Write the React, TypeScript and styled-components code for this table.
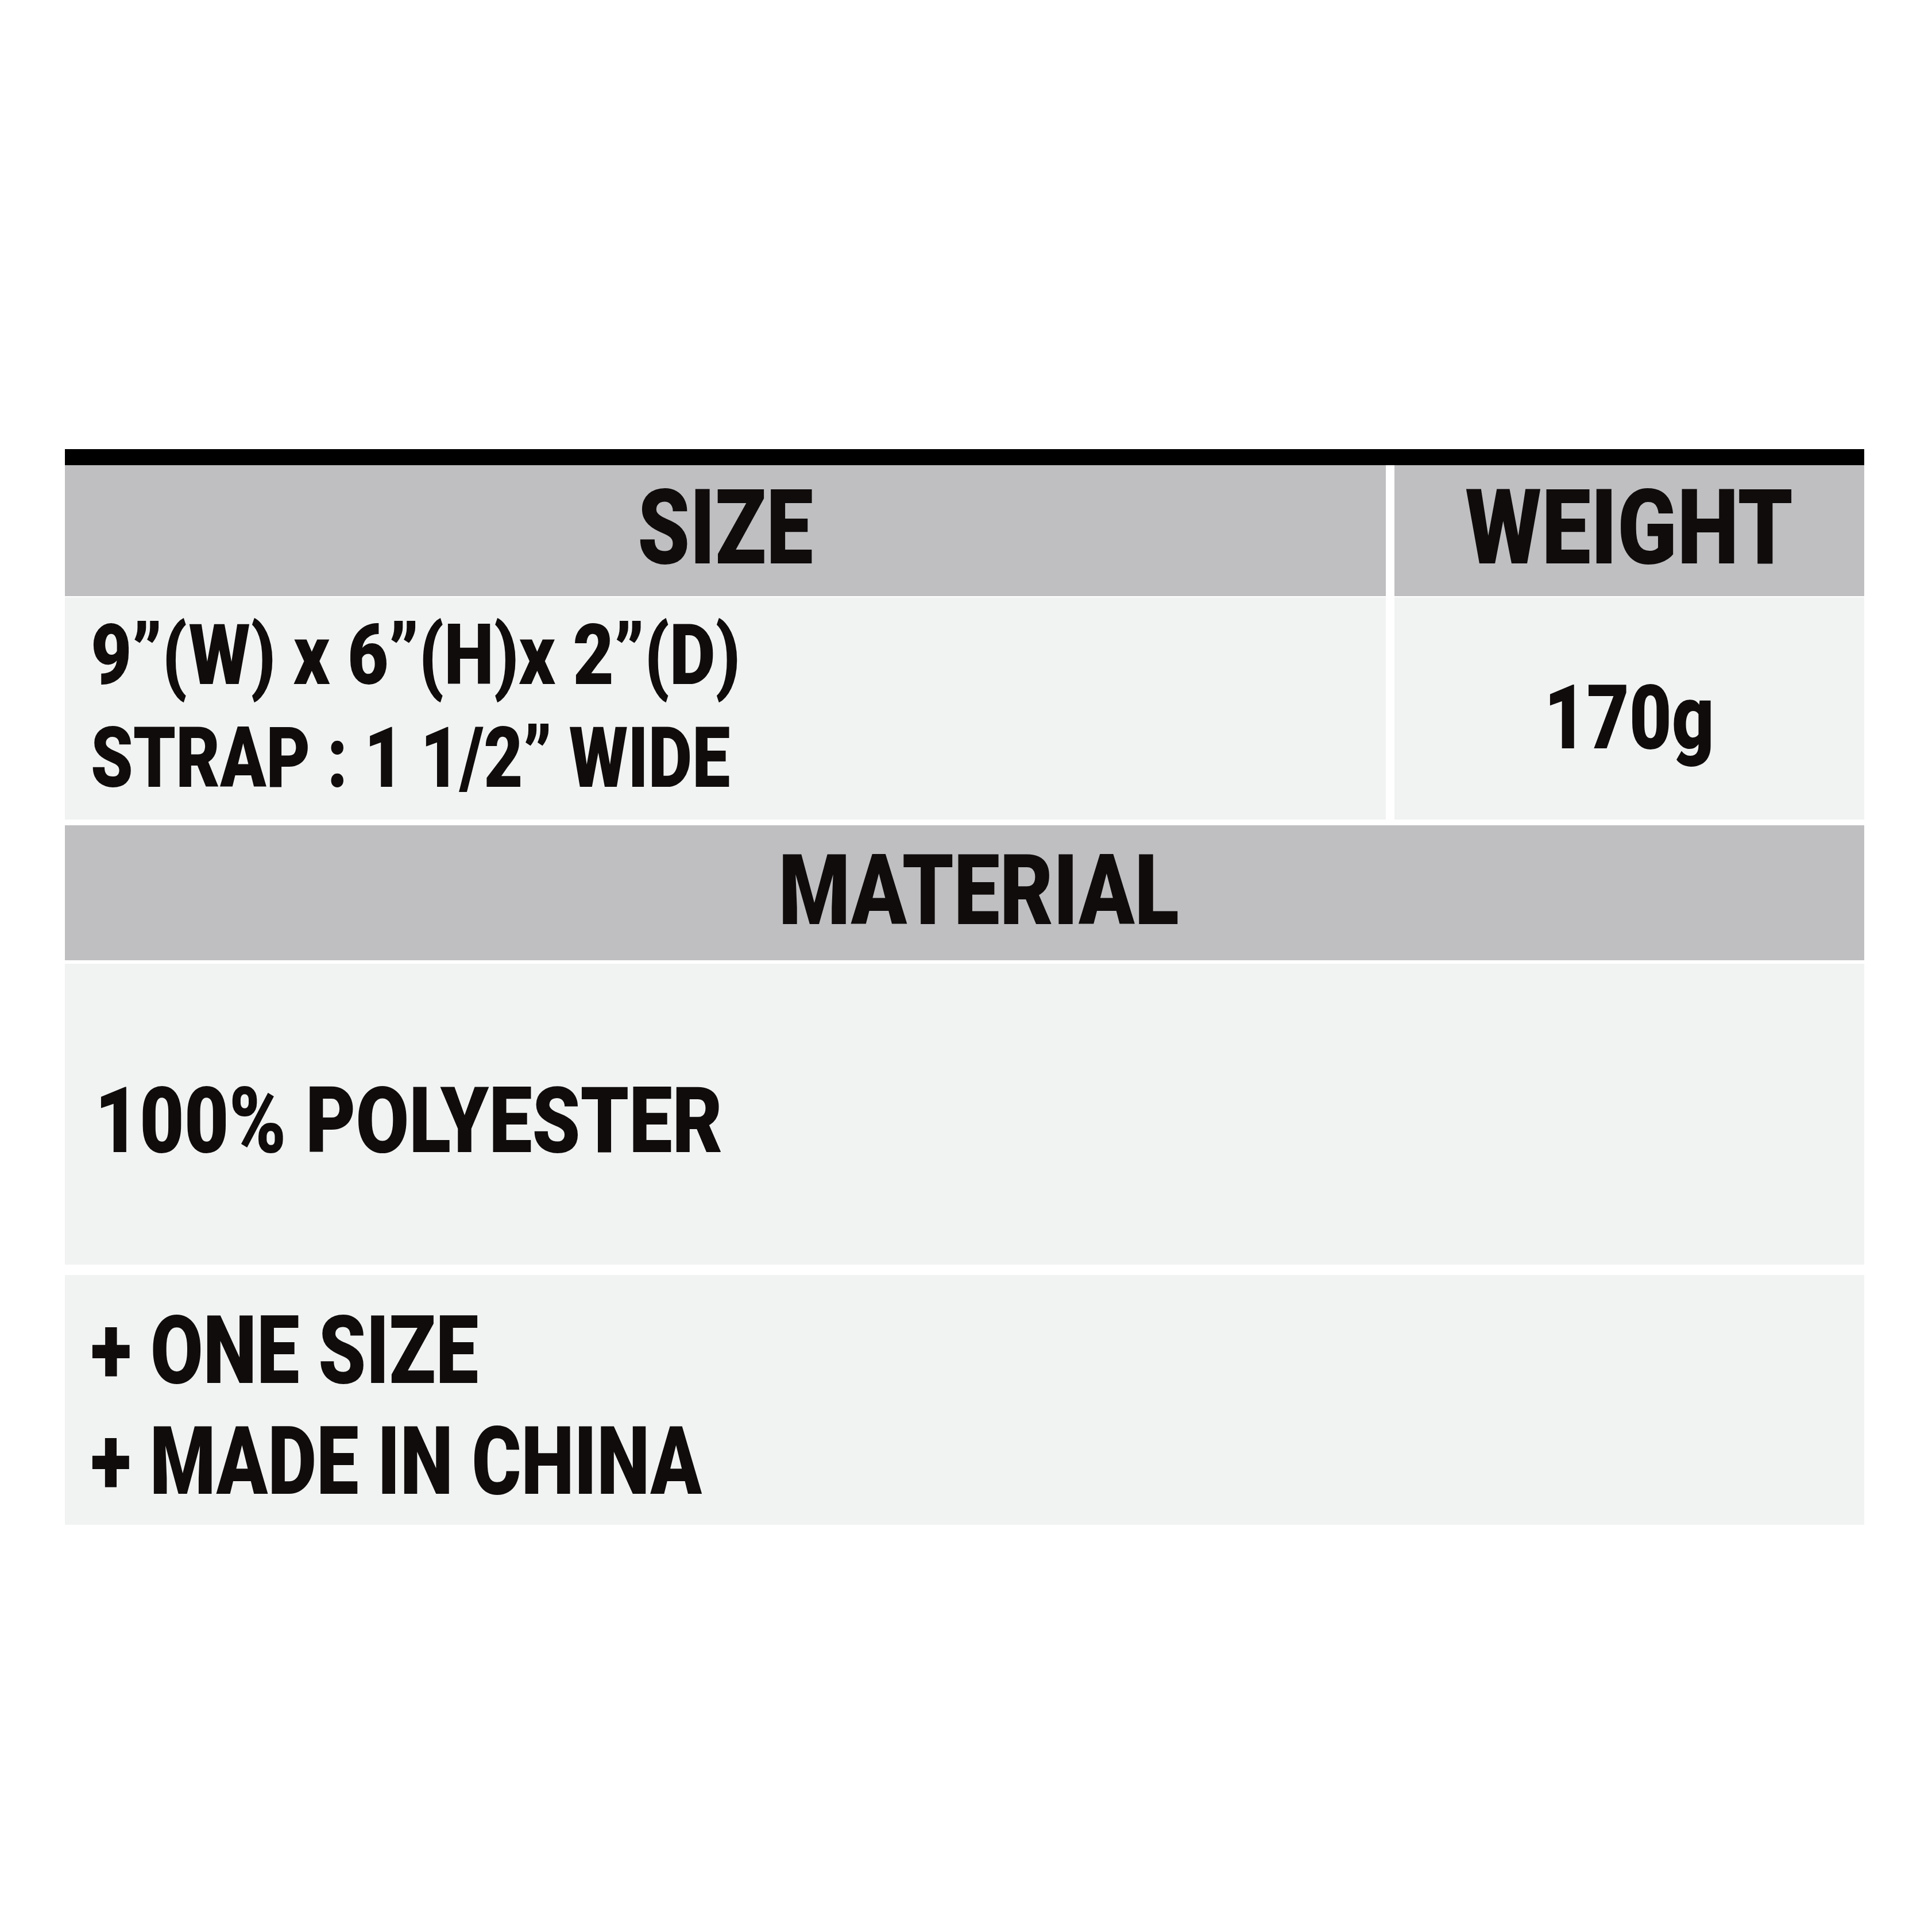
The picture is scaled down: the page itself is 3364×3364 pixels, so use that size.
import React from 'react';
import styled, { createGlobalStyle } from 'styled-components';

const GlobalStyle = createGlobalStyle`
  html, body {
    margin: 0;
    padding: 0;
    background: #ffffff;
  }
  body {
    font-family: Roboto, "Liberation Sans", Arial, sans-serif;
    font-weight: 900;
    color: #100c0c;
  }
`;

const Page = styled.div`
  width: 3364px;
  height: 3364px;
  padding: 782px 0 0 113px;
  box-sizing: border-box;
  background: #ffffff;
`;

const Sheet = styled.div`
  width: 3133px;
  display: flex;
  flex-direction: column;
`;

const TopRule = styled.div`
  height: 28px;
  background: #000000;
`;

const SplitRow = styled.div<{ $height: number; $gapBelow?: number }>`
  display: grid;
  grid-template-columns: 2300px 818px;
  column-gap: 15px;
  height: ${(p) => p.$height}px;
  margin-bottom: ${(p) => p.$gapBelow ?? 0}px;
`;

const HeadCell = styled.div`
  background: #bfbfc1;
  display: flex;
  align-items: center;
  justify-content: center;
  padding-bottom: 10px;
  box-sizing: border-box;
`;

const DataCell = styled.div<{ $center?: boolean; $padTop: number; $padLeft?: number }>`
  background: #f1f3f2;
  display: flex;
  flex-direction: column;
  align-items: ${(p) => (p.$center ? 'center' : 'flex-start')};
  padding-top: ${(p) => p.$padTop}px;
  padding-left: ${(p) => p.$padLeft ?? 0}px;
  box-sizing: border-box;
`;

const Band = styled.div<{ $height: number; $gapBelow?: number }>`
  height: ${(p) => p.$height}px;
  margin-bottom: ${(p) => p.$gapBelow ?? 0}px;
  background: #bfbfc1;
  display: flex;
  align-items: center;
  justify-content: center;
  padding: 0 0 8px 50px;
  box-sizing: border-box;
`;

const Panel = styled.div<{ $height: number; $gapBelow?: number; $padTop: number; $padLeft: number }>`
  height: ${(p) => p.$height}px;
  margin-bottom: ${(p) => p.$gapBelow ?? 0}px;
  background: #f1f3f2;
  display: flex;
  flex-direction: column;
  align-items: flex-start;
  padding: ${(p) => p.$padTop}px 0 0 ${(p) => p.$padLeft}px;
  box-sizing: border-box;
`;

const Line = styled.span<{ $size: number; $lh?: number; $sx: number; $origin?: string }>`
  display: inline-block;
  white-space: pre;
  font-size: ${(p) => p.$size}px;
  line-height: ${(p) => (p.$lh ? `${p.$lh}px` : 1)};
  transform: scaleX(${(p) => p.$sx});
  transform-origin: ${(p) => p.$origin ?? 'left'} center;
`;

const App: React.FC = () => {
  return (
    <Page>
      <GlobalStyle />
      <Sheet>
        <TopRule />
        <SplitRow $height={228} $gapBelow={2}>
          <HeadCell>
            <Line $size={182} $sx={0.8} $origin="center">SIZE</Line>
          </HeadCell>
          <HeadCell>
            <Line $size={182} $sx={0.84} $origin="center">WEIGHT</Line>
          </HeadCell>
        </SplitRow>
        <SplitRow $height={387} $gapBelow={10}>
          <DataCell $padTop={12} $padLeft={45}>
            <Line $size={146} $lh={179} $sx={0.845}>9”(W) x 6”(H)x 2”(D)</Line>
            <Line $size={146} $lh={179} $sx={0.808}>STRAP : 1 1/2” WIDE</Line>
          </DataCell>
          <DataCell $center $padTop={132}>
            <Line $size={156} $sx={0.82} $origin="center">170g</Line>
          </DataCell>
        </SplitRow>
        <Band $height={235} $gapBelow={6}>
          <Line $size={170} $sx={0.84} $origin="center">MATERIAL</Line>
        </Band>
        <Panel $height={524} $gapBelow={18} $padTop={194} $padLeft={52}>
          <Line $size={160} $sx={0.84}>100% POLYESTER</Line>
        </Panel>
        <Panel $height={435} $padTop={35} $padLeft={45}>
          <Line $size={166} $lh={193} $sx={0.8}>+ ONE SIZE</Line>
          <Line $size={166} $lh={193} $sx={0.79}>+ MADE IN CHINA</Line>
        </Panel>
      </Sheet>
    </Page>
  );
};

export default App;
